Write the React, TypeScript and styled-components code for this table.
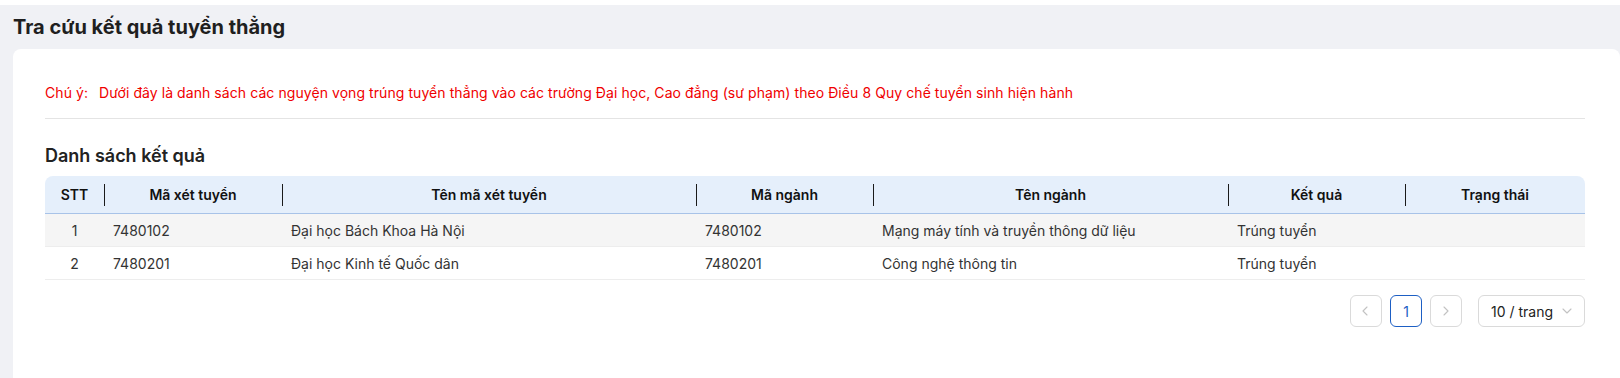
import React from "react";
import styled, { createGlobalStyle } from "styled-components";

const Global = createGlobalStyle`
  html, body { margin: 0; padding: 0; background: #ffffff; }
  body { font-family: Inter, "Noto Sans", "Liberation Sans", sans-serif; color: #333; }
  * { box-sizing: border-box; }
`;

const Page = styled.div`
  margin-top: 5px;
  background: #f0f1f5;
  padding-left: 13px;
  height: 373px;
  display: flex;
  flex-direction: column;
  overflow: hidden;
`;

const Title = styled.h1`
  margin: 0;
  height: 44px;
  display: flex;
  align-items: center;
  font-size: 20px;
  font-weight: 700;
  color: #1f1f1f;
`;

const Card = styled.div`
  flex: 1;
  background: #ffffff;
  border-radius: 8px 8px 0 0;
  padding: 0 35px 0 32px;
`;

const Note = styled.div`
  height: 70px;
  display: flex;
  align-items: center;
  gap: 11px;
  font-size: 14px;
  letter-spacing: 0.07px;
  color: #f00000;
  border-bottom: 1px solid #e4e4e4;
  padding-top: 18px;
`;

const SectionTitle = styled.h2`
  margin: 0;
  height: 57px;
  padding-top: 15px;
  display: flex;
  align-items: center;
  font-size: 18px;
  font-weight: 600;
  color: #222;
`;

const Table = styled.table`
  width: 100%;
  border-collapse: separate;
  border-spacing: 0;
  table-layout: fixed;
  font-size: 14px;
`;

const HeadCell = styled.th<{ $sep?: boolean }>`
  position: relative;
  height: 38px;
  background: #e5effb;
  border-bottom: 1px solid #a8c3e8;
  font-weight: 600;
  color: #111;
  text-align: center;
  padding: 0 8px;
  &:first-child { border-top-left-radius: 8px; }
  &:last-child { border-top-right-radius: 8px; }
  ${(p) =>
    p.$sep
      ? `&::before {
    content: "";
    position: absolute;
    left: 0;
    top: 8px;
    height: 22px;
    width: 1px;
    background: #1a1a1a;
  }`
      : ""}
`;

const Row = styled.tr<{ $alt?: boolean }>`
  background: ${(p) => (p.$alt ? "#f5f5f5" : "#ffffff")};
`;

const Cell = styled.td<{ $center?: boolean }>`
  height: 33px;
  padding: 0 9px;
  border-bottom: 1px solid #ededed;
  color: #333;
  text-align: ${(p) => (p.$center ? "center" : "left")};
  white-space: nowrap;
`;

const Pager = styled.div`
  display: flex;
  justify-content: flex-end;
  align-items: center;
  gap: 8px;
  margin-top: 15px;
`;

const PageBtn = styled.div<{ $active?: boolean }>`
  width: 32px;
  height: 32px;
  border-radius: 6px;
  border: 1px solid ${(p) => (p.$active ? "#1d5fc4" : "#dadada")};
  color: ${(p) => (p.$active ? "#1d5fc4" : "#c0c0c0")};
  display: flex;
  align-items: center;
  justify-content: center;
  font-size: 14px;
`;

const SizeSelect = styled.div`
  margin-left: 8px;
  width: 107px;
  height: 32px;
  border-radius: 6px;
  border: 1px solid #dadada;
  display: flex;
  align-items: center;
  justify-content: space-between;
  padding: 0 11px 0 12px;
  font-size: 14px;
  color: #222;
`;

const Chevron = ({ dir }: { dir: "left" | "right" | "down" }) => {
  const d =
    dir === "left" ? "M7 2 L3 6 L7 10" : dir === "right" ? "M4 2 L8 6 L4 10" : "M2 4 L6 8 L10 4";
  return (
    <svg width="12" height="12" viewBox="0 0 12 12" fill="none">
      <path d={d} stroke="#c2c2c2" strokeWidth="1.1" strokeLinecap="round" strokeLinejoin="round" />
    </svg>
  );
};

const cols = [59, 178, 414, 177, 355, 177, 180];
const headers = ["STT", "Mã xét tuyển", "Tên mã xét tuyển", "Mã ngành", "Tên ngành", "Kết quả", "Trạng thái"];
const rows = [
  ["1", "7480102", "Đại học Bách Khoa Hà Nội", "7480102", "Mạng máy tính và truyền thông dữ liệu", "Trúng tuyển", ""],
  ["2", "7480201", "Đại học Kinh tế Quốc dân", "7480201", "Công nghệ thông tin", "Trúng tuyển", ""],
];

export default function App() {
  return (
    <>
      <Global />
      <Page>
        <Title>Tra cứu kết quả tuyển thẳng</Title>
        <Card>
          <Note>
            <span>Chú ý:</span>
            <span>
              Dưới đây là danh sách các nguyện vọng trúng tuyển thẳng vào các trường Đại học, Cao đẳng (sư phạm) theo
              Điều 8 Quy chế tuyển sinh hiện hành
            </span>
          </Note>
          <SectionTitle>Danh sách kết quả</SectionTitle>
          <Table>
            <colgroup>
              {cols.map((w, i) => (
                <col key={i} style={{ width: w }} />
              ))}
            </colgroup>
            <thead>
              <tr>
                {headers.map((h, i) => (
                  <HeadCell key={h} $sep={i > 0}>
                    {h}
                  </HeadCell>
                ))}
              </tr>
            </thead>
            <tbody>
              {rows.map((r, ri) => (
                <Row key={ri} $alt={ri === 0}>
                  {r.map((c, ci) => (
                    <Cell key={ci} $center={ci === 0}>
                      {c}
                    </Cell>
                  ))}
                </Row>
              ))}
            </tbody>
          </Table>
          <Pager>
            <PageBtn>
              <Chevron dir="left" />
            </PageBtn>
            <PageBtn $active>1</PageBtn>
            <PageBtn>
              <Chevron dir="right" />
            </PageBtn>
            <SizeSelect>
              <span>10 / trang</span>
              <Chevron dir="down" />
            </SizeSelect>
          </Pager>
        </Card>
      </Page>
    </>
  );
}
